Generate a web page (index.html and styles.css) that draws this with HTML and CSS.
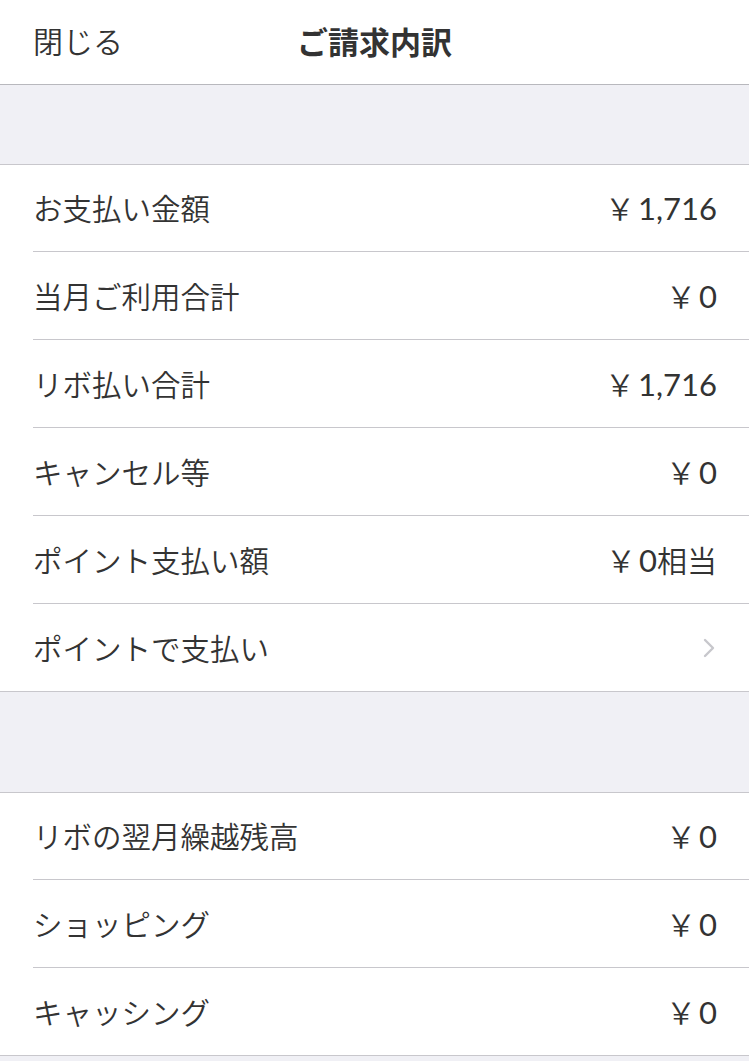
FILE: index.html
```html
<!DOCTYPE html>
<html lang="ja">
<head>
<meta charset="utf-8">
<link rel="stylesheet" href="styles.css">
</head>
<body>
<div class="screen">
  <header class="nav">
    <span class="nav-close">閉じる</span>
    <span class="nav-title">ご請求内訳</span>
  </header>
  <div class="spacer spacer-top"></div>
  <ul class="list">
    <li class="row"><span class="label">お支払い金額</span><span class="value"><span class="yen">￥</span>1,716</span></li>
    <li class="row"><span class="label">当月ご利用合計</span><span class="value"><span class="yen">￥</span>0</span></li>
    <li class="row"><span class="label">リボ払い合計</span><span class="value"><span class="yen">￥</span>1,716</span></li>
    <li class="row"><span class="label">キャンセル等</span><span class="value"><span class="yen">￥</span>0</span></li>
    <li class="row"><span class="label">ポイント支払い額</span><span class="value"><span class="yen">￥</span>0<span class="suffix">相当</span></span></li>
    <li class="row"><span class="label">ポイントで支払い</span><span class="chev"><svg width="12" height="20" viewBox="0 0 12 20"><path d="M2 2 L10 10 L2 18" fill="none" stroke="#c7c7cc" stroke-width="2.4" stroke-linecap="round" stroke-linejoin="round"/></svg></span></li>
  </ul>
  <div class="spacer spacer-mid"></div>
  <ul class="list">
    <li class="row"><span class="label">リボの翌月繰越残高</span><span class="value"><span class="yen">￥</span>0</span></li>
    <li class="row"><span class="label">ショッピング</span><span class="value"><span class="yen">￥</span>0</span></li>
    <li class="row"><span class="label">キャッシング</span><span class="value"><span class="yen">￥</span>0</span></li>
  </ul>
  <div class="spacer spacer-end"></div>
</div>
</body>
</html>
```
FILE: styles.css
```css
html, body {
  margin: 0;
  padding: 0;
  background: #f0f0f5;
}
body {
  font-family: "Noto Sans CJK JP", "Noto Sans", sans-serif;
  color: #333333;
}
.screen {
  width: 749px;
  min-height: 1061px;
  background: #f0f0f5;
  overflow: hidden;
}
.nav {
  position: relative;
  height: 84px;
  background: #ffffff;
  border-bottom: 1px solid #b8b8bd;
  display: flex;
  align-items: center;
  padding: 0 33px;
}
.nav-close {
  font-size: 30px;
  font-weight: 350;
  color: #333;
  line-height: 1;
  margin-top: -4px;
}
.nav-title {
  position: absolute;
  left: 0;
  right: 0;
  top: 0;
  bottom: 0;
  display: flex;
  align-items: center;
  justify-content: center;
  font-size: 31px;
  font-weight: 700;
  color: #333;
  margin-top: -4px;
  pointer-events: none;
}
.spacer-top {
  height: 79px;
}
.spacer-mid {
  height: 100px;
}
.spacer-end {
  height: 10px;
}
.list {
  list-style: none;
  margin: 0;
  padding: 0 0 0 33px;
  background: #ffffff;
  border-top: 1px solid #c8c7cc;
  border-bottom: 1px solid #c8c7cc;
}
.row {
  height: 87px;
  display: flex;
  align-items: center;
  justify-content: space-between;
  padding-right: 32px;
  border-bottom: 1px solid #c8c7cc;
}
.row:first-child {
  height: 86px;
}
.row:last-child {
  border-bottom: none;
}
.label {
  font-size: 29.5px;
  font-weight: 350;
  color: #333;
  line-height: 1;
}
.value {
  font-family: "Lato", "Noto Sans CJK JP", sans-serif;
  font-size: 31px;
  font-weight: 400;
  color: #333;
  line-height: 1;
  display: flex;
  align-items: baseline;
}
.yen {
  font-family: "Noto Sans CJK JP", sans-serif;
  font-weight: 350;
  font-size: 30px;
  margin-right: 3px;
}
.suffix {
  font-family: "Noto Sans CJK JP", sans-serif;
  font-weight: 350;
  font-size: 30px;
}
.chev {
  display: flex;
  align-items: center;
  margin-right: 2px;
}
```
